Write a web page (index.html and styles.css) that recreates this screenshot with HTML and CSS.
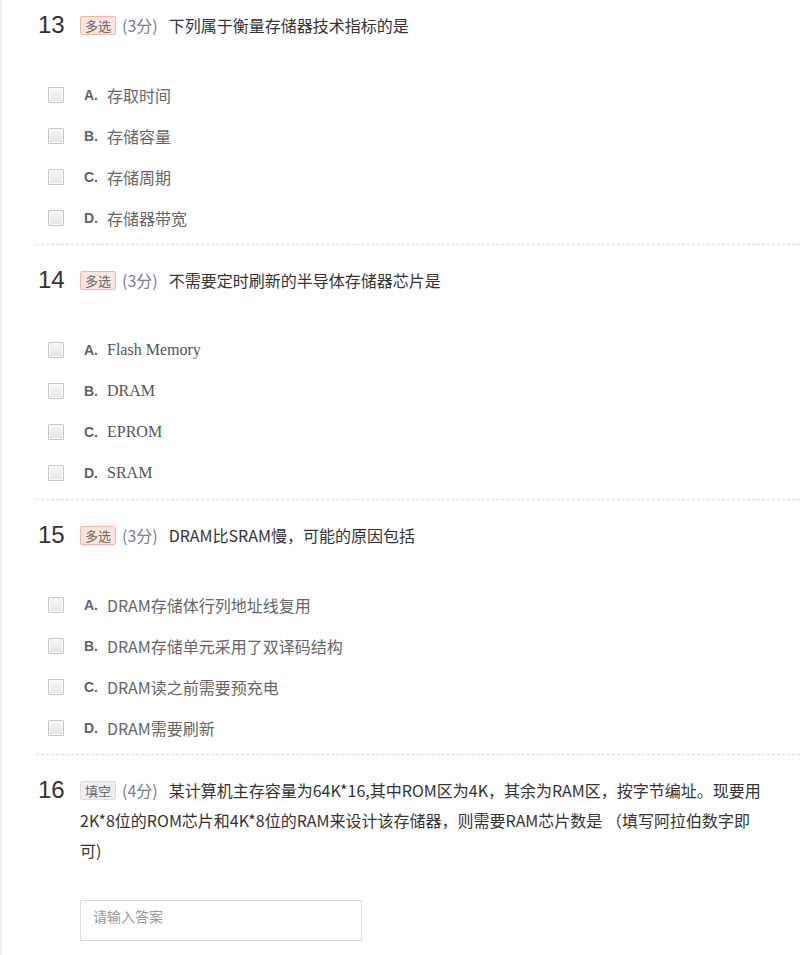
FILE: index.html
```html
<!DOCTYPE html>
<html lang="zh-CN">
<head>
<meta charset="utf-8">
<title>题目</title>
<link rel="stylesheet" href="styles.css">
</head>
<body>
<div class="page">
  <div class="question">
    <div class="qhead">
      <div class="qnum">13</div>
      <div class="qtitle"><span class="badge badge-multi">多选</span><span class="score">(3分)</span><span class="qtext">下列属于衡量存储器技术指标的是</span></div>
    </div>
    <ul class="options">
      <li class="option"><span class="checkbox"></span><span class="label">A.</span><span class="text">存取时间</span></li>
      <li class="option"><span class="checkbox"></span><span class="label">B.</span><span class="text">存储容量</span></li>
      <li class="option"><span class="checkbox"></span><span class="label">C.</span><span class="text">存储周期</span></li>
      <li class="option"><span class="checkbox"></span><span class="label">D.</span><span class="text">存储器带宽</span></li>
    </ul>
  </div>
  <div class="question">
    <div class="qhead">
      <div class="qnum">14</div>
      <div class="qtitle"><span class="badge badge-multi">多选</span><span class="score">(3分)</span><span class="qtext">不需要定时刷新的半导体存储器芯片是</span></div>
    </div>
    <ul class="options options-serif">
      <li class="option"><span class="checkbox"></span><span class="label">A.</span><span class="text">Flash Memory</span></li>
      <li class="option"><span class="checkbox"></span><span class="label">B.</span><span class="text">DRAM</span></li>
      <li class="option"><span class="checkbox"></span><span class="label">C.</span><span class="text">EPROM</span></li>
      <li class="option"><span class="checkbox"></span><span class="label">D.</span><span class="text">SRAM</span></li>
    </ul>
  </div>
  <div class="question">
    <div class="qhead">
      <div class="qnum">15</div>
      <div class="qtitle"><span class="badge badge-multi">多选</span><span class="score">(3分)</span><span class="qtext">DRAM比SRAM慢，可能的原因包括</span></div>
    </div>
    <ul class="options">
      <li class="option"><span class="checkbox"></span><span class="label">A.</span><span class="text">DRAM存储体行列地址线复用</span></li>
      <li class="option"><span class="checkbox"></span><span class="label">B.</span><span class="text">DRAM存储单元采用了双译码结构</span></li>
      <li class="option"><span class="checkbox"></span><span class="label">C.</span><span class="text">DRAM读之前需要预充电</span></li>
      <li class="option"><span class="checkbox"></span><span class="label">D.</span><span class="text">DRAM需要刷新</span></li>
    </ul>
  </div>
  <div class="question question-last">
    <div class="qhead">
      <div class="qnum">16</div>
      <div class="qtitle"><span class="badge badge-fill">填空</span><span class="score">(4分)</span>某计算机主存容量为64K*16,其中ROM区为4K，其余为RAM区，按字节编址。现要用2K*8位的ROM芯片和4K*8位的RAM来设计该存储器，则需要RAM芯片数是 （填写阿拉伯数字即可)</div>
    </div>
    <div class="answer"><div class="answer-box">请输入答案</div></div>
  </div>
</div>
</body>
</html>
```
FILE: styles.css
```css
html, body {
  margin: 0;
  padding: 0;
  background: #ffffff;
}
body {
  font-family: "Noto Sans CJK SC", "Liberation Sans", sans-serif;
  color: #333333;
}
.page {
  border-left: 2px solid #eeeef2;
  min-height: 955px;
  box-sizing: border-box;
  padding-top: 10px;
}
.question {
  margin-left: 34px;
  padding: 20px 0 6px;
  border-bottom: 1px dashed #d8d8d8;
}
.question:first-child {
  padding-top: 0;
}
.question-last {
  border-bottom: none;
}
.qhead {
  display: flex;
  align-items: flex-start;
}
.qnum {
  width: 42px;
  padding-left: 2px;
  flex: none;
  font-family: "Liberation Sans", Arial, sans-serif;
  font-size: 24px;
  line-height: 30px;
  color: #333333;
}
.qtitle {
  width: 690px;
  font-size: 16px;
  line-height: 30px;
  color: #333333;
}
.badge {
  display: inline-block;
  font-size: 13px;
  line-height: 17px;
  padding: 0 4px;
  border: 1px solid;
  border-radius: 2px;
  vertical-align: 1px;
  color: #666666;
}
.badge-multi {
  background: #fde6e0;
  border-color: #f6b4a4;
}
.badge-fill {
  background: #eeeeee;
  border-color: #dddddd;
}
.score {
  margin-left: 6px;
  margin-right: 11px;
  color: #76808e;
}
.options {
  list-style: none;
  margin: 34px 0 0;
  padding: 0 0 0 12px;
}
.option {
  display: flex;
  align-items: center;
  height: 41px;
}
.checkbox {
  width: 14px;
  height: 14px;
  flex: none;
  border: 1px solid #c6c6c6;
  border-radius: 1px;
  background: linear-gradient(#f6f6f6, #e4e4e4);
  box-shadow: inset 0 0 0 1px #fafafa;
}
.label {
  margin-left: 20px;
  width: 23px;
  flex: none;
  font-family: "Liberation Sans", Arial, sans-serif;
  font-weight: bold;
  font-size: 14px;
  color: #5d626b;
}
.text {
  font-size: 16px;
  color: #666666;
}
.options-serif .text {
  font-family: "Liberation Serif", "Times New Roman", serif;
  color: #555555;
}
.answer {
  padding: 35px 0 20px 44px;
}
.answer-box {
  width: 268px;
  height: 35px;
  border: 1px solid #dddddd;
  padding: 4px 0 0 12px;
  font-size: 14px;
  line-height: 22px;
  color: #999999;
}
```
